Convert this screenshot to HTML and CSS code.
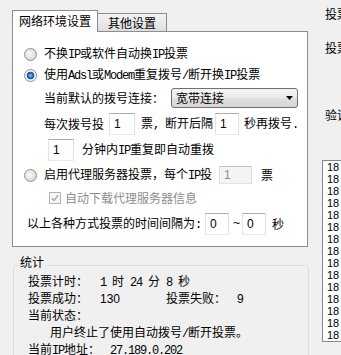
FILE: index.html
```html
<!DOCTYPE html>
<html>
<head>
<meta charset="utf-8">
<title>投票设置</title>
<link rel="stylesheet" href="styles.css">
</head>
<body>
<div class="window">
  <div class="left">
    <div class="tabs">
      <div class="tab tab-on">网络环境设置</div>
      <div class="tab tab-off">其他设置</div>
    </div>
    <div class="panel">
      <div class="row opt r1">
        <span class="radio"></span>
        <span>不换<span class="en">IP</span>或软件自动换<span class="en">IP</span>投票</span>
      </div>
      <div class="row opt r2">
        <span class="radio radio-on"></span>
        <span>使用<span class="en">Adsl</span>或<span class="en">Modem</span>重复拨号<span class="en">/</span>断开换<span class="en">IP</span>投票</span>
      </div>
      <div class="row sub r3">
        <span>当前默认的拨号连接：</span>
        <div class="combo">
          <span>宽带连接</span>
          <svg width="7" height="4" viewBox="0 0 7 4"><path d="M0 0h7L3.5 4z" fill="#000"/></svg>
        </div>
      </div>
      <div class="row sub r4">
        <span>每次拨号投</span>
        <input class="num w26 ml5" value="1">
        <span class="ml6">票<span class="en">, </span>断开后隔</span>
        <input class="num w24 ml2" value="1">
        <span class="ml5">秒再拨号<span class="en">.</span></span>
      </div>
      <div class="row sub r5">
        <input class="num w26 ml4" value="1">
        <span class="ml8">分钟内<span class="en">IP</span>重复即自动重拨</span>
      </div>
      <div class="row opt r6">
        <span class="radio"></span>
        <span>启用代理服务器投票，每个<span class="en">IP</span>投</span>
        <input class="num num-off ml7" value="1" disabled>
        <span class="ml9">票</span>
      </div>
      <div class="row sub2 r7">
        <svg class="check" width="12" height="12" viewBox="0 0 12 12">
          <rect x="0.5" y="0.5" width="11" height="11" fill="#f6f6f6" stroke="#b4b4b4"/>
          <path d="M3 6.2l2 2.2L9.2 3.2" fill="none" stroke="#a8a8a8" stroke-width="1.4"/>
        </svg>
        <span class="grey">自动下载代理服务器信息</span>
      </div>
      <div class="row sub3 r8">
        <span>以上各种方式投票的时间间隔为<span class="en">:</span></span>
        <input class="num w24 ml4" value="0">
        <span class="en ml4">~</span>
        <input class="num w24 ml3" value="0">
        <span class="ml6">秒</span>
      </div>
    </div>
    <fieldset class="stats">
      <legend>统计</legend>
      <div class="stats-body">
        <div class="line"><span class="lab">投票计时：</span><span class="en">1 </span>时<span class="en"> 24 </span>分<span class="en"> 8 </span>秒</div>
        <div class="line"><span class="lab">投票成功：</span><span class="val sans">130</span><span class="lab lab2">投票失败：</span><span class="sans">9</span></div>
        <div class="line">当前状态：</div>
        <div class="line msg">用户终止了使用自动拨号<span class="en">/</span>断开投票。</div>
        <div class="line"><span class="lab lab-ip">当前<span class="en">IP</span>地址：</span><span class="en">27.189.0.202</span></div>
      </div>
    </fieldset>
  </div>
  <div class="right">
    <div class="rlab">投票</div>
    <div class="rlab rlab2">投票</div>
    <div class="rlab rlab3">验证</div>
    <div class="list">
      <div>18</div><div>18</div><div>18</div><div>18</div><div>18</div>
      <div>18</div><div>18</div><div>18</div><div>18</div><div>18</div>
      <div>18</div><div>18</div><div>18</div><div>18</div><div>18</div>
    </div>
  </div>
</div>
</body>
</html>
```

FILE: styles.css
```css
body {
  margin: 0;
  background: #f0f0f0;
  font: 12px/16px "Noto Sans CJK SC", sans-serif;
  color: #000;
}

.window {
  display: flex;
  width: 341px;
  height: 355px;
  overflow: hidden;
}

.left {
  flex: none;
  width: 309px;
  box-sizing: border-box;
  padding: 10px 0 0 12px;
}

/* tabs */
.tabs {
  display: flex;
  align-items: flex-end;
  height: 21px;
}
.tab {
  box-sizing: border-box;
  border: 1px solid #898c95;
  border-bottom: none;
  text-align: center;
  white-space: nowrap;
}
.tab-on {
  position: relative;
  z-index: 1;
  width: 86px;
  height: 22px;
  margin-bottom: -1px;
  background: #fff;
  line-height: 19px;
}
.tab-off {
  width: 70px;
  height: 18px;
  margin-left: -1px;
  background: linear-gradient(#f4f4f4, #e9e9e9 50%, #dedede);
  line-height: 17px;
}

/* main panel */
.panel {
  width: 296px;
  height: 216px;
  box-sizing: border-box;
  border: 1px solid #898c95;
  background: #fff;
  padding: 12px 0 0 0;
}
.row {
  display: flex;
  align-items: center;
  white-space: nowrap;
}
.opt { padding-left: 11px; }
.sub { padding-left: 31px; }
.sub2 { padding-left: 36px; }
.sub3 { padding-left: 14px; }
.r1 { height: 20px; }
.r2 { height: 22px; }
.r3 { height: 24px; }
.r4 { height: 28px; }
.r5 { height: 24px; }
.r6 { height: 26px; }
.r7 { height: 20px; }
.r8 { height: 32px; }

.en {
  font-family: "Liberation Mono", monospace;
  letter-spacing: -1.2px;
}
.sans { font-family: "Liberation Sans", sans-serif; }
.grey { color: #8d8d8d; }

.radio {
  flex: none;
  width: 13px;
  height: 13px;
  box-sizing: border-box;
  margin-right: 7px;
  border: 1px solid #8e8f8f;
  border-radius: 50%;
  background: radial-gradient(circle at 40% 40%, #fbfbfb, #d9d9d9 70%, #ececec);
}
.radio-on {
  background: radial-gradient(circle at 50% 50%, #8fcaf6 0, #2f78d0 2px, #1a4f9e 3.5px, #f7f7f7 4.2px, #e2e2e2 100%);
}

.check {
  flex: none;
  margin-right: 4px;
}

.combo {
  display: flex;
  align-items: center;
  justify-content: space-between;
  width: 127px;
  height: 20px;
  box-sizing: border-box;
  margin-left: 7px;
  padding: 0 4px;
  border: 1px solid #707070;
  border-radius: 3px;
  background: linear-gradient(#f5f5f5, #ebebeb 50%, #e0e0e0 51%, #d6d6d6);
}

.num {
  box-sizing: border-box;
  height: 22px;
  margin: 0;
  padding: 0 0 0 4px;
  border: 1px solid;
  border-color: #abadb3 #dbdfe6 #e3e9ef #e2e3ea;
  background: #fff;
  font: 12px "Liberation Sans", sans-serif;
  color: #000;
  outline: none;
}
.num-off {
  width: 33px;
  height: 18px;
  background: #f4f4f4;
  color: #8a8a8a;
  border-color: #c2c2c2 #dcdcdc #e2e2e2 #dcdcdc;
}
.w24 { width: 24px; }
.w26 { width: 26px; }
.ml2 { margin-left: 2px; }
.ml3 { margin-left: 3px; }
.ml4 { margin-left: 4px; }
.ml5 { margin-left: 5px; }
.ml6 { margin-left: 6px; }
.ml7 { margin-left: 7px; }
.ml8 { margin-left: 8px; }
.ml9 { margin-left: 9px; }

/* statistics group */
.stats {
  width: 296px;
  height: 120px;
  box-sizing: border-box;
  margin: 7px 0 0 1px;
  padding: 0;
  border: 1px solid #d5dfe5;
  border-radius: 3px;
}
.stats legend {
  margin-left: 5px;
  padding: 0 1px 6px;
  line-height: 16px;
}
.stats-body {
  margin-top: -4px;
  padding-left: 14px;
  white-space: nowrap;
}
.line {
  height: 17px;
  line-height: 17px;
  overflow: visible;
}
.lab {
  display: inline-block;
  width: 72px;
}
.val {
  display: inline-block;
  width: 66px;
}
.lab2 { width: 71px; }
.lab-ip { width: 82px; }
.msg { padding-left: 22px; }

/* right column */
.right {
  flex: 1;
  min-width: 0;
  padding: 6px 0 0 13px;
  overflow: hidden;
  white-space: nowrap;
}
.rlab {
  margin-left: 3px;
  line-height: 16px;
}
.rlab2 { margin-top: 18px; }
.rlab3 { margin-top: 51px; }
.list {
  width: 60px;
  height: 182px;
  box-sizing: border-box;
  margin-top: 37px;
  padding-left: 4px;
  border: 1px solid #828790;
  background: #fff;
  font: 11px/12px "Liberation Sans", sans-serif;
}
```
